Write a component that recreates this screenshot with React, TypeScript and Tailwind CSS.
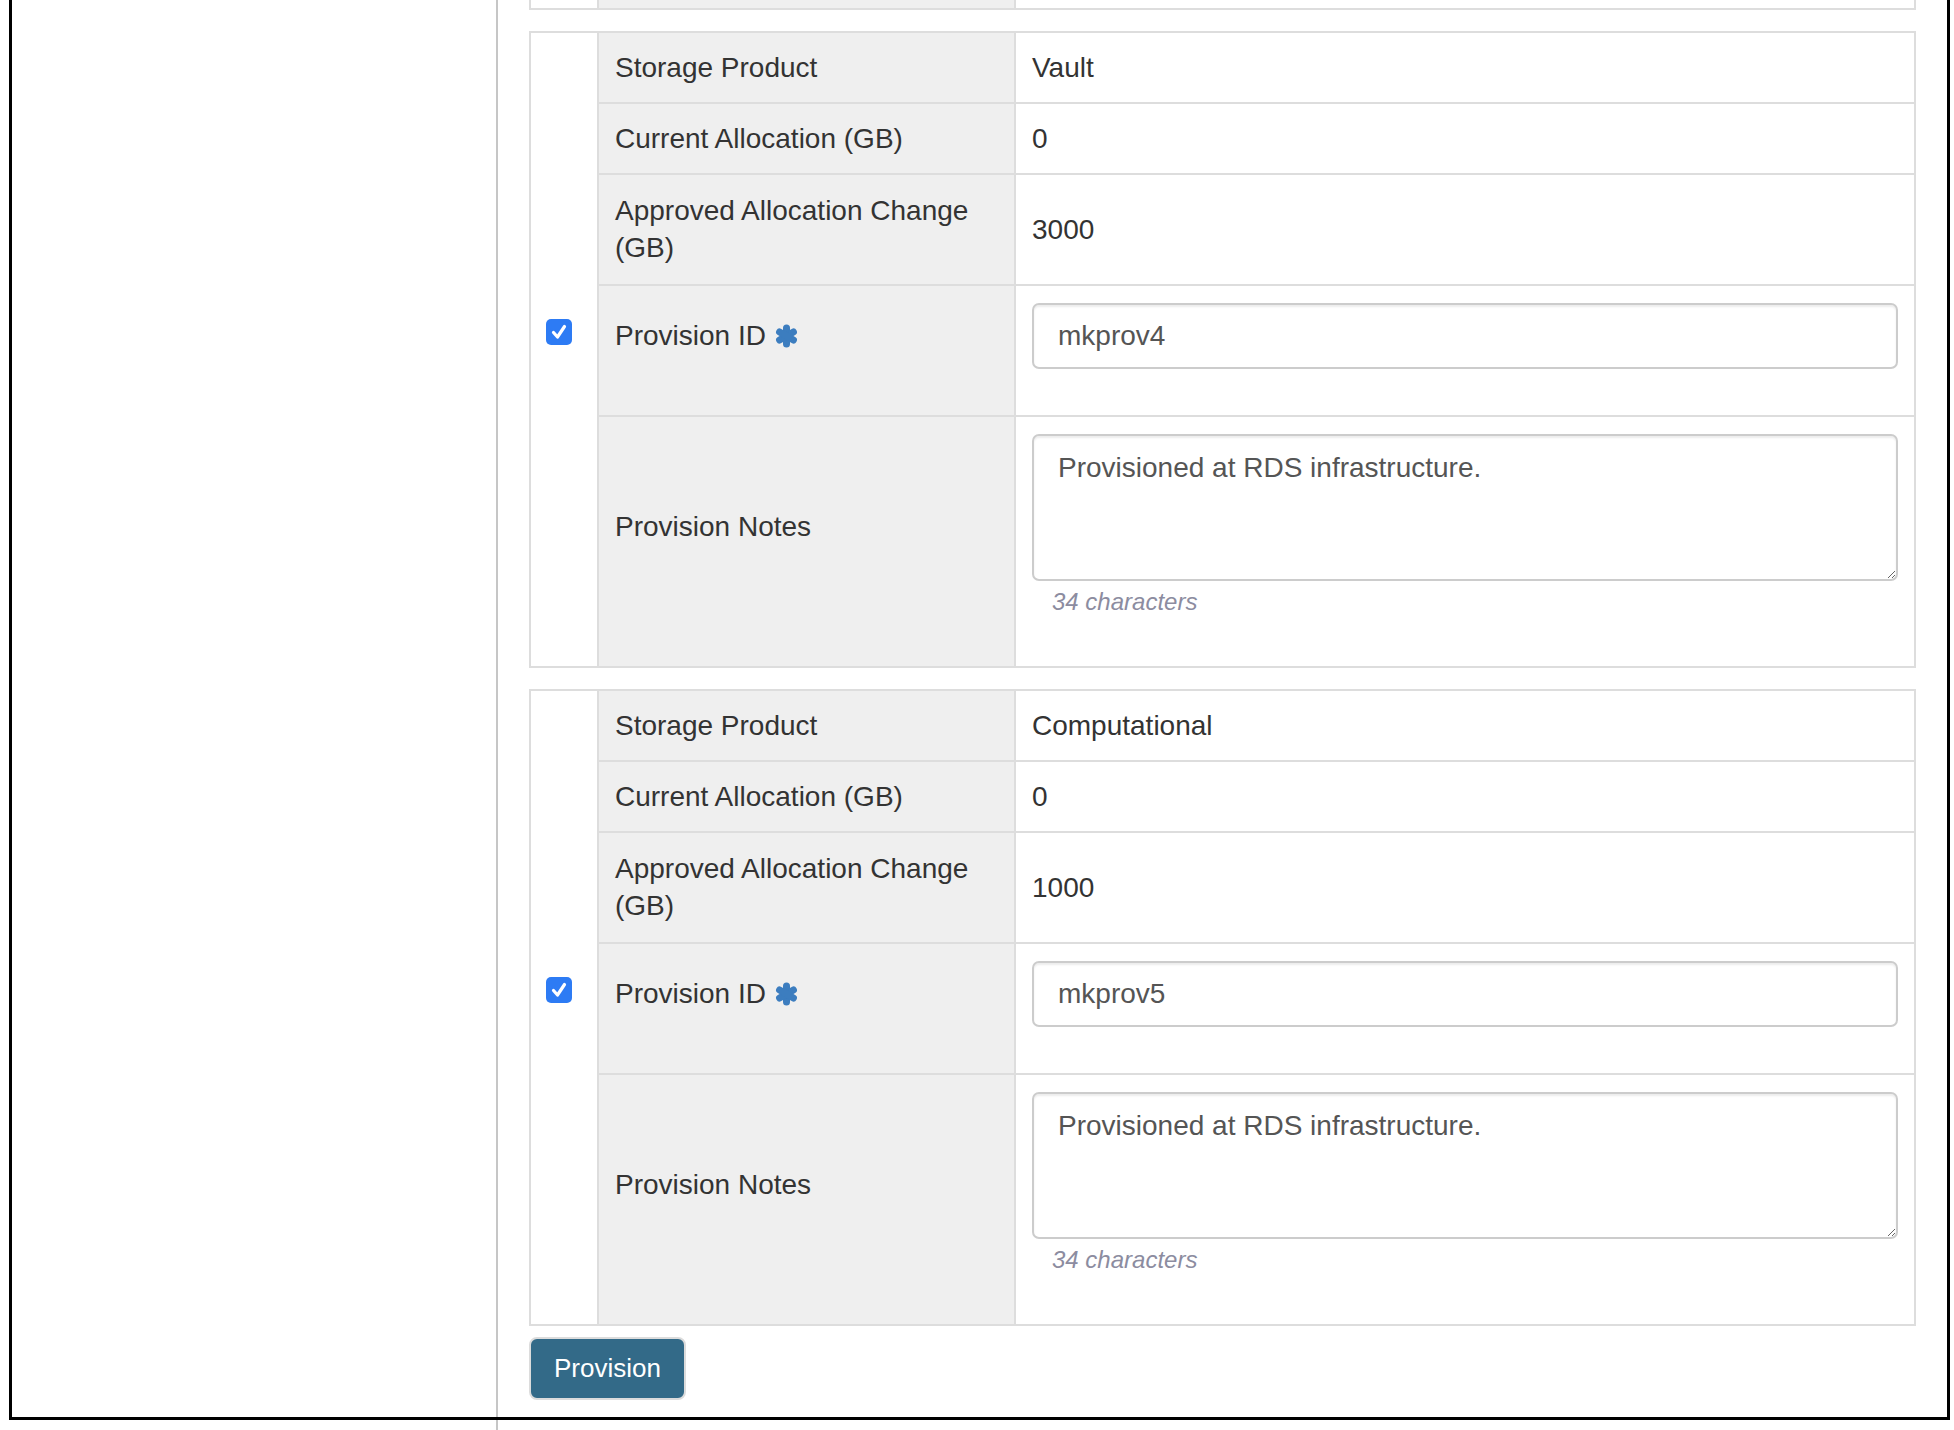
import React from "react";

type Block = { product: string; current: string; change: string; provId: string; notes: string };

const blocks: Block[] = [
  { product: "Vault", current: "0", change: "3000", provId: "mkprov4", notes: "Provisioned at RDS infrastructure." },
  { product: "Computational", current: "0", change: "1000", provId: "mkprov5", notes: "Provisioned at RDS infrastructure." },
];

function Asterisk() {
  return (
    <svg width="25" height="24" viewBox="0 0 25 24" className="ml-[8px] shrink-0">
      <g fill="#3c7dbf">
        <rect x="9" y="0.5" width="7" height="23" rx="3.5" />
        <rect x="9" y="0.5" width="7" height="23" rx="3.5" transform="rotate(60 12.5 12)" />
        <rect x="9" y="0.5" width="7" height="23" rx="3.5" transform="rotate(120 12.5 12)" />
      </g>
    </svg>
  );
}

function CheckBox() {
  return (
    <span className="flex h-[26px] w-[26px] items-center justify-center rounded-[5px] bg-[#2d7bf4]">
      <svg width="18" height="18" viewBox="0 0 18 18">
        <path d="M3.5 9.5 L7.5 14 L14.5 3.5" fill="none" stroke="white" strokeWidth="3.2" strokeLinecap="round" strokeLinejoin="round" />
      </svg>
    </span>
  );
}

function InfoRow({ label, value, first, tall }: { label: React.ReactNode; value: string; first?: boolean; tall?: boolean }) {
  const py = tall ? "pt-[17px] pb-[18px]" : "py-[16px]";
  return (
    <div className="flex">
      <div className="w-[66px] shrink-0" />
      <div className={`flex w-[417px] shrink-0 items-center border-l-2 border-[#dddddd] bg-[#efefef] px-[16px] ${py} ${first ? "" : "border-t-2"}`}>
        <span>{label}</span>
      </div>
      <div className={`flex flex-1 items-center border-l-2 border-[#dddddd] px-[16px] ${py} ${first ? "" : "border-t-2"}`}>
        {value}
      </div>
    </div>
  );
}

function ProvisionTable({ b }: { b: Block }) {
  return (
    <div className="border-2 border-[#dddddd]">
      <InfoRow first label="Storage Product" value={b.product} />
      <InfoRow label="Current Allocation (GB)" value={b.current} />
      <InfoRow tall label={<>Approved Allocation Change<br />(GB)</>} value={b.change} />

      {/* provision id */}
      <div className="flex">
        <div className="w-[66px] shrink-0 pl-[15px] pt-[35px]">
          <CheckBox />
        </div>
        <div className="flex w-[417px] shrink-0 items-start border-l-2 border-t-2 border-[#dddddd] bg-[#efefef] px-[16px] pt-[31px]">
          <span>Provision ID</span>
          <span className="flex h-[37px] items-center"><Asterisk /></span>
        </div>
        <div className="flex-1 border-l-2 border-t-2 border-[#dddddd] px-[16px] pt-[17px] pb-[17px]">
          <input
            readOnly
            defaultValue={b.provId}
            className="mb-[29px] block h-[66px] w-full rounded-[7px] border-2 border-[#cccccc] px-[24px] text-[#555555] shadow-[inset_0_2px_2px_rgba(0,0,0,0.075)] outline-none"
          />
        </div>
      </div>

      {/* notes */}
      <div className="flex">
        <div className="w-[66px] shrink-0" />
        <div className="w-[417px] shrink-0 border-l-2 border-t-2 border-[#dddddd] bg-[#efefef] px-[16px] pt-[91px]">
          Provision Notes
        </div>
        <div className="flex-1 border-l-2 border-t-2 border-[#dddddd] px-[16px] pt-[17px] pb-[16px]">
          <textarea
            readOnly
            defaultValue={b.notes}
            className="block h-[147px] w-full rounded-[7px] border-2 border-[#cccccc] px-[24px] pt-[13px] text-[#555555] shadow-[inset_0_2px_2px_rgba(0,0,0,0.075)] outline-none"
          />
          <div className="mt-[5px] mb-[32px] pl-[20px] text-[24px] leading-[32px] italic text-[#8c8ca0]">34 characters</div>
        </div>
      </div>
    </div>
  );
}

export default function App() {
  return (
    <div className="relative flex h-[1430px] w-[1954px] overflow-hidden bg-white font-['Liberation_Sans',Arial,sans-serif] text-[28px] leading-[37px] text-[#333333]">
      <div className="w-[498px] shrink-0 border-r-2 border-[#c6c6c6]" />

      <div className="flex-1 pl-[31px] pr-[38px]">
        {/* tail of the previous table */}
        <div className="flex h-[10px] border-x-2 border-b-2 border-[#dddddd]">
          <div className="w-[66px] shrink-0" />
          <div className="w-[417px] shrink-0 border-l-2 border-[#dddddd] bg-[#efefef]" />
          <div className="flex-1 border-l-2 border-[#dddddd]" />
        </div>

        <div className="mt-[21px] flex flex-col gap-[21px]">
          {blocks.map((b) => (
            <ProvisionTable key={b.provId} b={b} />
          ))}
        </div>

        <button className="mt-[11px] h-[63px] w-[157px] rounded-[8px] border-2 border-[#dcdcdc] bg-[#336a88] text-[26px] text-white">
          Provision
        </button>
      </div>

      {/* black frame drawn over the page */}
      <div className="pointer-events-none absolute left-[9px] top-[-5px] h-[1425px] w-[1941px] border-[3px] border-black" />
    </div>
  );
}
